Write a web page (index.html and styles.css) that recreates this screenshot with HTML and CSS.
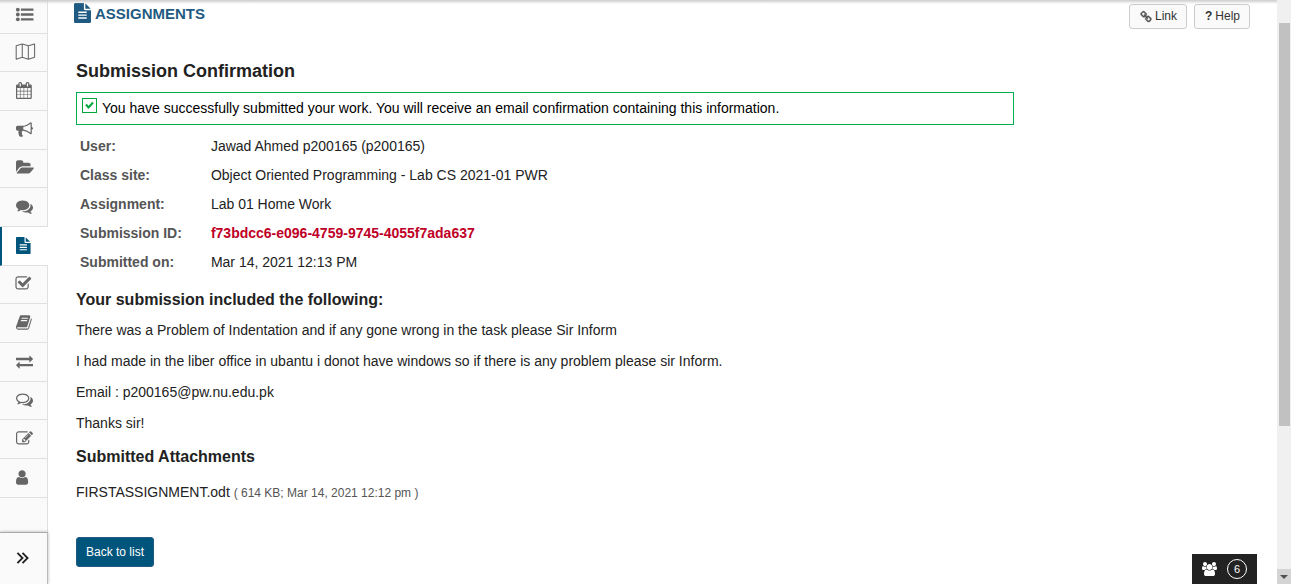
FILE: index.html
```html
<!DOCTYPE html>
<html lang="en">
<head>
<meta charset="utf-8">
<meta name="viewport" content="width=device-width, initial-scale=1">
<title>Assignments</title>
<link rel="stylesheet" href="styles.css">
</head>
<body>
<div class="page">
  <nav class="sidebar" aria-label="Site tools">
    <ul class="tools">
      <li><a href="#" aria-label="Overview"><svg viewBox="0 0 1792 1792"><circle cx="192" cy="384" r="200"/><circle cx="192" cy="896" r="200"/><circle cx="192" cy="1408" r="200"/><rect x="512" y="260" width="1330" height="248" rx="32"/><rect x="512" y="772" width="1330" height="248" rx="32"/><rect x="512" y="1284" width="1330" height="248" rx="32"/></svg></a></li>
      <li><a href="#" aria-label="Lessons"><svg viewBox="0 0 1792 1792"><path class="outline" d="M20 300L660 100L1300 300L1960 100V1500L1300 1700L660 1500L20 1700ZM660 100V1500M1300 300V1700"/></svg></a></li>
      <li><a href="#" aria-label="Calendar"><svg viewBox="64 0 1792 1792"><path d="M192 1664h288v-288h-288v288zm352 0h320v-288h-320v288zm-352-352h288v-320h-288v320zm352 0h320v-320h-320v320zm-352-384h288v-288h-288v288zm736 736h320v-288h-320v288zm-384-736h320v-288h-320v288zm768 736h288v-288h-288v288zm-384-352h320v-320h-320v320zm-352-864v-288q0-13-9.500-22.500t-22.500-9.500h-64q-13 0-22.500 9.500t-9.500 22.500v288q0 13 9.500 22.500t22.500 9.500h64q13 0 22.500-9.500t9.500-22.500zm736 864h288v-320h-288v320zm-384-384h320v-288h-320v288zm384 0h288v-288h-288v288zm32-480v-288q0-13-9.500-22.500t-22.500-9.500h-64q-13 0-22.500 9.500t-9.500 22.500v288q0 13 9.500 22.500t22.500 9.500h64q13 0 22.500-9.500t9.500-22.500zm384-64v1280q0 52-38 90t-90 38h-1408q-52 0-90-38t-38-90v-1280q0-52 38-90t90-38h128v-96q0-66 47-113t113-47h64q66 0 113 47t47 113v96h384v-96q0-66 47-113t113-47h64q66 0 113 47t47 113v96h128q52 0 90 38t38 90z"/></svg></a></li>
      <li><a href="#" aria-label="Announcements"><svg viewBox="0 0 1792 1792"><path d="M1664 640q53 0 90.500 37.500t37.500 90.500-37.500 90.500-90.500 37.500v384q0 52-38 90t-90 38q-417-347-812-380-58 19-91 66t-31 100.500 40 92.500q-20 33-23 65.500t6 58 33.500 55 48 50 61.500 50.500q-29 58-111.500 83t-168.500 11.500-132-55.500q-7-23-29.500-87.500t-32-94.500-23-89-15-101 3.500-98.500 22-110.500h-122q-66 0-113-47t-47-113v-192q0-66 47-113t113-47h480q435 0 896-384 52 0 90 38t38 90v384zm-128 604v-954q-394 302-768 343v270q377 42 768 341z"/></svg></a></li>
      <li><a href="#" aria-label="Resources"><svg viewBox="0 0 1792 1792"><path d="M1879 952q0 31-31 66l-336 396q-43 51-120.500 86.500t-143.500 35.500h-1088q-34 0-60.500-13t-26.500-43q0-31 31-66l336-396q43-51 120.500-86.500t143.500-35.500h1088q34 0 60.500 13t26.500 43zm-343-344v160h-832q-94 0-197 47.500t-164 119.500l-337 396-5 6q0-4-.5-12.500t-.5-12.500v-960q0-92 66-158t158-66h320q92 0 158 66t66 158v32h544q92 0 158 66t66 158z"/></svg></a></li>
      <li><a href="#" aria-label="Forums"><svg viewBox="0 0 1792 1792"><path d="M1408 768q0 139-94 257t-256.500 186.500-353.500 68.500q-86 0-176-16-124 88-278 128-36 9-86 16h-3q-11 0-20.500-8t-11.500-21q-1-3-1-6.500t.5-6.500 2-6l2.500-5 3.500-5.500 4-5 4.500-5 4-4.500q5-6 23-25t26-29.500 22.500-29 25-38.500 20.500-44q-124-72-195-177t-71-224q0-139 94-257t256.500-186.500 353.500-68.500 353.500 68.500 256.500 186.500 94 257zm384 256q0 120-71 224.500t-195 176.500q10 24 20.500 44t25 38.500 22.500 29 26 29.500 23 25q1 1 4 4.500t4.500 5 4 5 3.500 5.500l2.500 5 2 6 .5 6.500-1 6.500q-3 14-13 22t-22 7q-50-7-86-16-154-40-278-128-90 16-176 16-271 0-472-132 58 4 88 4 161 0 309-45t264-129q125-92 192-212t67-254q0-77-23-152 129 71 204 178t75 230z"/></svg></a></li>
      <li class="current"><a href="#" aria-label="Assignments" aria-current="page"><svg viewBox="128 0 1792 1792"><path d="M1596 476q14 14 28 36h-472v-472q22 14 36 28zm-476 164h544v1056q0 40-28 68t-68 28h-1344q-40 0-68-28t-28-68v-1600q0-40 28-68t68-28h800v544q0 40 28 68t68 28zm160 736v-64q0-14-9-23t-23-9h-704q-14 0-23 9t-9 23v64q0 14 9 23t23 9h704q14 0 23-9t9-23zm0-256v-64q0-14-9-23t-23-9h-704q-14 0-23 9t-9 23v64q0 14 9 23t23 9h704q14 0 23-9t9-23zm0-256v-64q0-14-9-23t-23-9h-704q-14 0-23 9t-9 23v64q0 14 9 23t23 9h704q14 0 23-9t9-23z"/></svg></a></li>
      <li><a href="#" aria-label="Tests and quizzes"><svg viewBox="128 0 1792 1792"><path d="M1472 930v318q0 119-84.500 203.500t-203.500 84.500h-832q-119 0-203.500-84.500t-84.500-203.500v-832q0-119 84.500-203.500t203.500-84.500h832q63 0 117 25 15 7 18 23 3 17-9 29l-49 49q-10 10-23 10-3 0-9-2-23-6-45-6h-832q-66 0-113 47t-47 113v832q0 66 47 113t113 47h832q66 0 113-47t47-113v-254q0-13 9-22l64-64q10-10 23-10 6 0 12 3 20 8 20 29zm231-489l-814 814q-24 24-57 24t-57-24l-430-430q-24-24-24-57t24-57l110-110q24-24 57-24t57 24l263 263 647-647q24-24 57-24t57 24l110 110q24 24 24 57t-24 57z"/></svg></a></li>
      <li><a href="#" aria-label="Gradebook"><svg viewBox="64 0 1792 1792"><path d="M1703 478q40 57 18 129l-275 906q-19 64-76.500 107.500t-122.500 43.500h-923q-77 0-148.500-53.500t-99.500-131.500q-24-67-2-127 0-4 3-27t4-37q1-8-3-21.500t-3-19.500q2-11 8-21t16.500-23.500 16.500-23.500q23-38 45-91.500t30-91.500q3-10 .5-30t-.5-28q3-11 17-28t17-23q21-36 42-92t25-90q1-9-2.500-32t.5-28q4-13 22-30.500t22-22.500q19-26 42.500-84.500t27.500-96.500q1-8-3-25.500t-2-26.500q2-8 9-18t18-23 17-21q8-12 16.500-30.500t15-35 16-36 19.500-32 26.500-23.500 36-11.500 47.500 5.500l-1 3q38-9 51-9h761q74 0 114 56t18 130l-274 906q-36 119-71.500 153.500t-128.500 34.500h-869q-27 0-38 15-11 16-1 43 24 70 144 70h923q29 0 56-15.500t35-41.500l300-987q7-22 5-57 38 15 59 43zm-1064 2q-4 13 2 22.500t20 9.500h608q13 0 25.500-9.500t16.500-22.500l21-64q4-13-2-22.500t-20-9.500h-608q-13 0-25.500 9.500t-16.500 22.500zm-83 256q-4 13 2 22.500t20 9.500h608q13 0 25.500-9.500t16.500-22.500l21-64q4-13-2-22.500t-20-9.500h-608q-13 0-25.500 9.500t-16.500 22.500z"/></svg></a></li>
      <li><a href="#" aria-label="Drop box"><svg viewBox="0 0 1792 1792"><path d="M1792 1184v192q0 13-9.500 22.500t-22.500 9.500h-1376v192q0 13-9.500 22.500t-22.500 9.500q-12 0-24-10l-319-320q-9-9-9-22 0-14 9-23l320-320q9-9 23-9 13 0 22.500 9.500t9.500 22.500v192h1376q13 0 22.500 9.500t9.500 22.500zm0-544q0 14-9 23l-320 320q-9 9-23 9-13 0-22.500-9.500t-9.500-22.500v-192h-1376q-13 0-22.500-9.500t-9.500-22.500v-192q0-13 9.500-22.500t22.500-9.500h1376v-192q0-14 9-23t23-9q12 0 24 10l319 319q9 9 9 23z"/></svg></a></li>
      <li><a href="#" aria-label="Chat room"><svg viewBox="0 0 1792 1792"><path d="M704 384q-153 0-286 52t-211.500 141-78.500 191q0 82 53 158t149 132l97 56-35 84q34-20 62-39l44-31 53 10q78 14 153 14 153 0 286-52t211.500-141 78.500-191-78.500-191-211.500-141-286-52zm0-128q191 0 353.500 68.500t256.500 186.500 94 257-94 257-256.500 186.500-353.500 68.500q-86 0-176-16-124 88-278 128-36 9-86 16h-3q-11 0-20.500-8t-11.500-21q-1-3-1-6.500t.5-6.500 2-6l2.500-5 3.500-5.500 4-5 4.500-5 4-4.500q5-6 23-25t26-29.500 22.500-29 25-38.500 20.500-44q-124-72-195-177t-71-224q0-139 94-257t256.500-186.500 353.500-68.500zm822 1169q10 24 20.500 44t25 38.500 22.500 29 26 29.500 23 25q1 1 4 4.500t4.500 5 4 5 3.500 5.500l2.500 5 2 6 .5 6.500-1 6.500q-3 14-13 22t-22 7q-50-7-86-16-154-40-278-128-90 16-176 16-271 0-472-132 58 4 88 4 161 0 309-45t264-129q125-92 192-212t67-254q0-77-23-152 129 71 204 178t75 230q0 120-71 224.500t-195 176.500z"/></svg></a></li>
      <li><a href="#" aria-label="Sign-up"><svg viewBox="0 0 1792 1792"><path d="M888 1184l116-116-152-152-116 116v56h96v96h56zm440-720q-16-16-33 1l-350 350q-17 17-1 33t33-1l350-350q17-17 1-33zm80 594v190q0 119-84.500 203.500t-203.500 84.500h-832q-119 0-203.500-84.500t-84.500-203.500v-832q0-119 84.500-203.500t203.500-84.500h832q63 0 117 25 15 7 18 23 3 17-9 29l-49 49q-14 14-32 8-23-6-45-6h-832q-66 0-113 47t-47 113v832q0 66 47 113t113 47h832q66 0 113-47t47-113v-126q0-13 9-22l64-64q15-15 35-7t20 29zm-96-738l288 288-672 672h-288v-288zm444 132l-92 92-288-288 92-92q28-28 68-28t68 28l152 152q28 28 28 68t-28 68z"/></svg></a></li>
      <li><a href="#" aria-label="Roster"><svg viewBox="256 0 1792 1792"><path d="M1536 1399q0 109-62.500 187t-150.500 78h-854q-88 0-150.500-78t-62.500-187q0-85 8.500-160.500t31.500-152 58.500-131 94-89 134.500-34.500q131 128 313 128t313-128q76 0 134.500 34.500t94 89 58.500 131 31.500 152 8.500 160.500zm-256-887q0 159-112.500 271.500t-271.500 112.500-271.500-112.500-112.500-271.500 112.500-271.500 271.500-112.500 271.500 112.500 112.500 271.500z"/></svg></a></li>
    </ul>
    <button class="expand" type="button" aria-label="Expand tool menu"><svg viewBox="0 0 14 14"><path d="M1.500 1.500L7 7l-5.500 5.500M7 1.500L12.500 7L7 12.500"/></svg></button>
  </nav>

  <main class="content">
    <header class="tool-header">
      <h1 class="tool-title"><svg viewBox="128 0 1536 1792"><path d="M1596 476q14 14 28 36h-472v-472q22 14 36 28zm-476 164h544v1056q0 40-28 68t-68 28h-1344q-40 0-68-28t-28-68v-1600q0-40 28-68t68-28h800v544q0 40 28 68t68 28zm160 736v-64q0-14-9-23t-23-9h-704q-14 0-23 9t-9 23v64q0 14 9 23t23 9h704q14 0 23-9t9-23zm0-256v-64q0-14-9-23t-23-9h-704q-14 0-23 9t-9 23v64q0 14 9 23t23 9h704q14 0 23-9t9-23zm0-256v-64q0-14-9-23t-23-9h-704q-14 0-23 9t-9 23v64q0 14 9 23t23 9h704q14 0 23-9t9-23z"/></svg>ASSIGNMENTS</h1>
      <div class="actions">
        <a class="action" href="#"><svg viewBox="0 0 1792 1792"><path d="M1520 1216q0-40-28-68l-208-208q-28-28-68-28-42 0-72 32 3 3 19 18.500t21.500 21.500 15 19 13 25.500 3.500 27.500q0 40-28 68t-68 28q-15 0-27.500-3.500t-25.500-13-19-15-21.500-21.500-18.500-19q-33 31-33 73 0 40 28 68l206 207q27 27 68 27 40 0 68-26l147-146q28-28 28-67zm-703-705q0-40-28-68l-206-207q-28-28-68-28-39 0-68 27l-147 146q-28 28-28 67 0 40 28 68l208 208q27 27 68 27 42 0 72-31-3-3-19-18.500t-21.500-21.500-15-19-13-25.500-3.500-27.500q0-40 28-68t68-28q15 0 27.500 3.500t25.500 13 19 15 21.500 21.500 18.500 19q33-31 33-73zm895 705q0 120-85 203l-147 146q-83 83-203 83-121 0-204-85l-206-207q-83-83-83-203 0-123 88-209l-88-88q-86 88-208 88-120 0-204-84l-208-208q-84-84-84-204t85-203l147-146q83-83 203-83 121 0 204 85l206 207q83 83 83 203 0 123-88 209l88 88q86-88 208-88 120 0 204 84l208 208q84 84 84 204z"/></svg>Link</a>
        <a class="action" href="#"><b>?</b>Help</a>
      </div>
    </header>

    <h2 class="heading">Submission Confirmation</h2>
    <p class="notice"><svg viewBox="0 0 15 15"><rect x=".5" y=".5" width="14" height="14"/><path d="M4 6.500L6.500 9.500L11 4.500"/></svg>You have successfully submitted your work. You will receive an email confirmation containing this information.</p>

    <table class="details">
      <tr><th scope="row">User:</th><td>Jawad Ahmed p200165 (p200165)</td></tr>
      <tr><th scope="row">Class site:</th><td>Object Oriented Programming - Lab CS 2021-01 PWR</td></tr>
      <tr><th scope="row">Assignment:</th><td>Lab 01 Home Work</td></tr>
      <tr><th scope="row">Submission ID:</th><td class="submission-id">f73bdcc6-e096-4759-9745-4055f7ada637</td></tr>
      <tr><th scope="row">Submitted on:</th><td>Mar 14, 2021 12:13 PM</td></tr>
    </table>

    <h3 class="subheading">Your submission included the following:</h3>
    <div class="submission">
      <p>There was a Problem of Indentation and if any gone wrong in the task please Sir Inform</p>
      <p>I had made in the liber office in ubantu i donot have windows so if there is any problem please sir Inform.</p>
      <p>Email : p200165@pw.nu.edu.pk</p>
      <p>Thanks sir!</p>
    </div>

    <h3 class="subheading">Submitted Attachments</h3>
    <p class="attachment"><a href="#">FIRSTASSIGNMENT.odt</a> <small>( 614 KB; Mar 14, 2021 12:12 pm )</small></p>
    <button class="back" type="button">Back to list</button>
  </main>

  <div class="scrollbar" aria-hidden="true">
    <div class="thumb"></div>
    <div class="scroll-down"><svg viewBox="0 0 8 4"><path d="M0 0h8L4 4z"/></svg></div>
  </div>
</div>
<button class="chat" type="button" aria-label="6 users online"><svg viewBox="0 0 1920 1792"><path d="M593 896q-162 5-265 128h-134q-82 0-138-40.500t-56-118.500q0-353 124-353 6 0 43.500 21t97.500 42.500 119 21.500q67 0 133-23-5 37-5 66 0 139 81 256zm1071 637q0 120-73 189.500t-194 69.500h-874q-121 0-194-69.500t-73-189.500q0-53 3.500-103.500t14-109 26.500-108.500 43-97.500 62-81 85.500-53.500 111.500-20q10 0 43 21.500t73 48 107 48 135 21.500 135-21.500 107-48 73-48 43-21.500q61 0 111.500 20t85.500 53.500 62 81 43 97.500 26.500 108.500 14 109 3.500 103.500zm-1024-1277q0 106-75 181t-181 75-181-75-75-181 75-181 181-75 181 75 75 181zm704 384q0 159-112.500 271.500t-271.500 112.500-271.500-112.500-112.500-271.500 112.500-271.500 271.500-112.500 271.500 112.500 112.500 271.500zm576 225q0 78-56 118.500t-138 40.500h-134q-103-123-265-128 81-117 81-256 0-29-5-66 66 23 133 23 59 0 119-21.500t97.500-42.500 43.500-21q124 0 124 353zm-128-609q0 106-75 181t-181 75-181-75-75-181 75-181 181-75 181 75 75 181z"/></svg><span class="count">6</span></button>
</body>
</html>
```
FILE: styles.css
```css
* { box-sizing: border-box; }

body {
  margin: 0;
  background: #fff;
  color: #222;
  font-family: "Liberation Sans", Arial, sans-serif;
  font-size: 14px;
  line-height: 21px;
}

h1, h2, h3, p { margin: 0; }
a { color: inherit; text-decoration: none; }
svg { display: block; flex: none; fill: currentColor; overflow: visible; }
button { font: inherit; cursor: pointer; }

.page { display: flex; min-height: 100vh; }

/* shadow cast by the site header */
.page::before {
  content: "";
  position: absolute;
  top: 0;
  left: 0;
  right: 14px;
  height: 4px;
  background: linear-gradient(#ccc, rgba(204, 204, 204, 0));
}

.sidebar {
  display: flex;
  flex: none;
  flex-direction: column;
  width: 48px;
  background: #fafafa;
}

.tools {
  flex: 1;
  margin: 0;
  padding: 0;
  border-right: 1px solid #e0e0e0;
  list-style: none;
}

.tools a {
  display: flex;
  align-items: center;
  height: 39px;
  padding: 0 0 2px 16px;
  border-bottom: 1px solid #e0e0e0;
  color: #666;
}

.tools li:nth-child(3n + 2) a { height: 38px; }
.tools li:first-child a { height: 34px; padding-bottom: 5px; }
.tools svg { width: 17px; height: 17px; }
.outline { fill: none; stroke: currentColor; stroke-width: 110; stroke-linejoin: round; }

.tools .current { margin-right: -1px; background: #fff; }
.tools .current a { padding-left: 14px; border-left: 2px solid #00557c; color: #00557c; }

.expand {
  display: flex;
  align-items: center;
  height: 52px;
  padding: 0 0 2px 16px;
  border: 0;
  border-top: 1px solid #aaa;
  border-right: 1px solid #bbb;
  background: #fafafa;
  box-shadow: 0 0 3px rgba(0, 0, 0, 0.3);
  color: #222;
}

.expand svg { width: 13px; height: 14px; fill: none; stroke: currentColor; stroke-width: 2; }

.content { flex: 1; min-width: 0; padding: 4px 28px 17px; }

.tool-header { display: flex; justify-content: space-between; }

.tool-title {
  display: flex;
  align-items: center;
  gap: 4px;
  height: 20px;
  margin: -1px 0 0 -2px;
  color: #1f5a82;
  font-size: 15px;
}

.tool-title svg { width: 17px; height: 20px; }
.actions { display: flex; gap: 7px; margin-right: -1px; }

.action {
  display: flex;
  align-items: center;
  gap: 3px;
  height: 25px;
  padding: 0 9px 0 10px;
  border: 1px solid #ccc;
  border-radius: 3px;
  background: #fafafa;
  color: #333;
  font-size: 12px;
}

.action svg { width: 12px; height: 12px; color: #555; stroke: currentColor; stroke-width: 60; }

.heading { margin-top: 30px; font-size: 18px; line-height: 24px; }

.notice {
  display: flex;
  gap: 5px;
  width: 80%;
  margin-top: 9px;
  padding: 5px;
  border: 1px solid #00b050;
  color: #000;
}

.notice svg { width: 15px; height: 15px; fill: none; stroke: #00a83c; }
.notice path { stroke-width: 2; }

.details { margin-top: 7px; border-collapse: collapse; }
.details th, .details td { padding: 4px; text-align: left; }
.details th { padding-right: 25px; color: #555; }
.details .submission-id { color: #c00026; font-weight: bold; }

.subheading { margin-top: 12px; font-size: 16px; line-height: 22px; }
.submission { display: grid; gap: 10px; margin-top: 9px; }
.attachment { margin-top: 14px; }
.attachment small { color: #555; font-size: 12px; }

.back {
  height: 30px;
  margin-top: 33px;
  padding: 0 9px;
  border: 1px solid #1f5a82;
  border-radius: 3px;
  background: #00557c;
  color: #fff;
  font-size: 12px;
}

.scrollbar {
  display: flex;
  flex: none;
  flex-direction: column;
  justify-content: space-between;
  width: 14px;
  padding-top: 23px;
  background: #f0f0f0;
}

.thumb { height: 69vh; margin: 0 1px 0 2px; background: #c1c1c1; }
.scroll-down { display: grid; place-items: center; height: 15px; background: #d4d4d4; color: #505050; }
.scroll-down svg { width: 8px; height: 4px; }

.chat {
  position: fixed;
  right: 34px;
  bottom: 0;
  display: flex;
  align-items: center;
  justify-content: space-between;
  width: 65px;
  height: 30px;
  padding: 0 10px;
  border: 0;
  background: #222;
  color: #fff;
}

.chat svg { width: 15px; height: 14px; }

.count {
  width: 20px;
  height: 20px;
  border: 1px solid #fff;
  border-radius: 50%;
  font-size: 11px;
  line-height: 18px;
}
```
